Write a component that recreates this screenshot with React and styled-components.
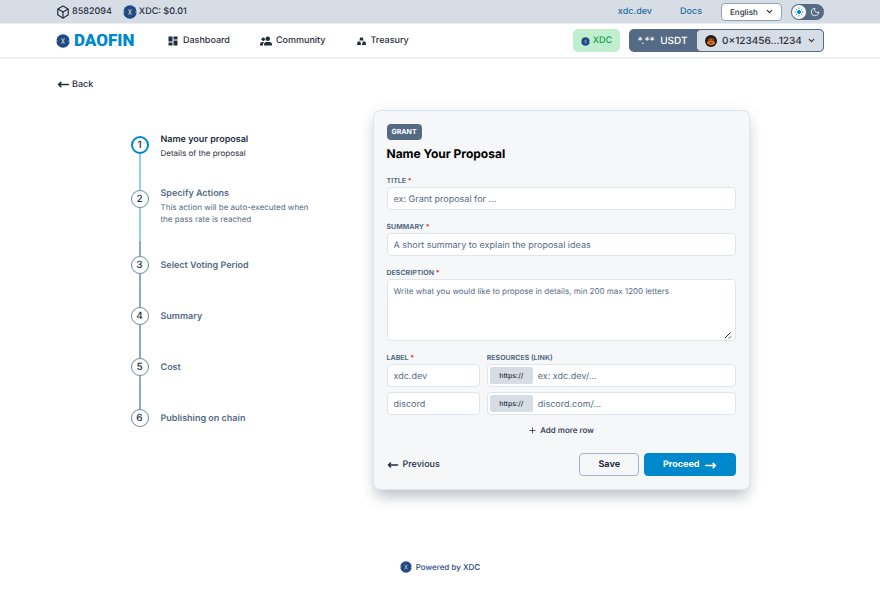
import React, { useState } from "react";
import styled, { createGlobalStyle } from "styled-components";
import { MdDashboard } from "react-icons/md";
import { FiBox } from "react-icons/fi";
import {
  HiOutlineArrowNarrowLeft,
  HiOutlineArrowNarrowRight,
} from "react-icons/hi";
import { ChevronDown, Moon, Plus, Sun } from "lucide-react";

const Palette = {
  ink: "#1f2d3d",
  slate: "#556b84",
  mist: "#d7dde4",
  line: "#dfe5ec",
  panel: "#f5f7f9",
  blue: "#0088cc",
  sky: "#8fd0f3",
  steel: "#93a6bc",
  navy: "#1f4a85",
  link: "#1a6c9c",
};

const GlobalStyle = createGlobalStyle`
  * {
    box-sizing: border-box;
  }
  body {
    margin: 0;
    background: white;
    color: ${Palette.ink};
    font-family: Inter, "Liberation Sans", sans-serif;
    font-size: 9px;
    line-height: 12px;
    text-rendering: geometricPrecision;
  }
  button, input, select, textarea {
    font: inherit;
    color: inherit;
    text-rendering: inherit;
  }
  button {
    cursor: pointer;
  }
  a {
    color: inherit;
    text-decoration: none;
  }
  svg {
    flex-shrink: 0;
  }
`;

const Page = styled.div`
  min-height: 100vh;
  display: flex;
  flex-direction: column;
`;

const Bar = styled.div`
  display: flex;
  align-items: center;
  justify-content: space-between;
  padding: 0 56px;
`;

const TopBar = styled(Bar)`
  height: 24px;
  background: ${Palette.mist};
  border-bottom: 1px solid #e8edf2;
`;

const NavBar = styled(Bar)`
  height: 35px;
  border-bottom: 2px solid #edf1f5;
`;

const Group = styled.div`
  display: flex;
  align-items: center;
  gap: ${(props) => props.$gap || 4}px;
  font-weight: 500;
`;

const Stat = styled(Group)`
  padding-top: 1px;
`;

const TopLink = styled.a`
  padding-top: 1px;
  color: ${Palette.link};
  font-weight: 500;
`;

const LanguageBox = styled.div`
  position: relative;
  display: flex;
  align-items: center;
  svg {
    position: absolute;
    right: 8px;
    pointer-events: none;
  }
`;

const Language = styled.select`
  appearance: none;
  width: 61px;
  height: 18px;
  padding: 0 8px;
  border: 1px solid #8fa3ba;
  border-radius: 4px;
  background: white;
  font-size: 8px;
  font-weight: 500;
`;

const ThemeSwitch = styled.button`
  display: flex;
  align-items: center;
  justify-content: space-between;
  width: 33px;
  height: 16px;
  padding: 0 4px 0 1px;
  border: 0;
  border-radius: 8px;
  background: ${Palette.slate};
  color: white;
  span {
    display: grid;
    place-items: center;
    width: 14px;
    height: 14px;
    border-radius: 50%;
    background: white;
    color: ${Palette.blue};
  }
`;

const Brand = styled.a`
  display: flex;
  align-items: center;
  gap: 4px;
  width: 111px;
  color: ${Palette.blue};
  font-family: Roboto, "Liberation Sans", sans-serif;
  font-size: 17px;
  font-weight: 900;
`;

const Nav = styled.nav`
  display: flex;
  flex: 1;
  gap: 30px;
`;

const NavLink = styled.a`
  display: flex;
  align-items: center;
  gap: 4px;
  padding-top: 1px;
  font-weight: 500;
`;

const Network = styled.button`
  display: flex;
  align-items: center;
  justify-content: center;
  gap: 3px;
  width: 47px;
  height: 23px;
  padding: 1px 0 0;
  border: 0;
  border-radius: 5px;
  background: #c0efcf;
  color: #169c46;
  font-weight: 500;
`;

const Wallet = styled.div`
  display: flex;
  align-items: center;
  height: 23px;
  border-radius: 5px;
  background: ${Palette.slate};
  color: white;
  font-size: 10px;
`;

const Balance = styled.span`
  width: 67px;
  text-align: center;
  white-space: pre;
`;

const Account = styled.button`
  display: flex;
  align-items: center;
  gap: 5px;
  width: 128px;
  height: 23px;
  padding: 0 8px;
  border: 1px solid ${Palette.slate};
  border-radius: 5px;
  background: ${Palette.mist};
  color: ${Palette.ink};
  font-weight: 500;
  svg:last-child {
    margin-left: auto;
    margin-right: 2px;
  }
`;

const BackLink = styled.a`
  display: flex;
  align-items: center;
  align-self: flex-start;
  gap: 2px;
  margin: 19px 57px 0;
  font-weight: 500;
  path {
    stroke-width: 3px;
  }
`;

const Main = styled.main`
  display: flex;
  align-items: flex-start;
  width: 100%;
  max-width: 619px;
  margin: 19px auto 0;
`;

const Stepper = styled.ol`
  flex: 1;
  margin: 0;
  padding: 26px 0 0;
  list-style: none;
`;

const StepItem = styled.li`
  display: flex;
  gap: 12px;
`;

const Track = styled.div`
  display: flex;
  flex-direction: column;
  align-items: center;
`;

const StepNumber = styled.span`
  display: grid;
  place-items: center;
  width: 18px;
  height: 18px;
  border: ${(props) =>
    props.$active ? `2px solid ${Palette.blue}` : "1px solid #7088a5"};
  border-radius: 50%;
  font-size: 10px;
  font-weight: 500;
`;

const Connector = styled.span`
  flex: 1;
  width: 2px;
  background: linear-gradient(
    ${Palette.sky} ${(props) => props.$done}%,
    ${Palette.steel} ${(props) => props.$done}%
  );
`;

const StepText = styled.div`
  max-width: 156px;
  margin-top: ${(props) => (props.$described ? -3 : 3)}px;
  padding-bottom: ${(props) =>
    props.$last ? 0 : props.$described ? 31 : 34}px;
  color: ${(props) => (props.$active ? Palette.ink : Palette.slate)};
  font-size: 8px;
  h3 {
    margin: 0;
    font-size: 9px;
    font-weight: 600;
    line-height: 14px;
  }
  p {
    margin: 0;
  }
`;

const Card = styled.form`
  flex: 0 1 377px;
  padding: 13px;
  border: 1px solid ${Palette.line};
  border-radius: 7px;
  background: ${Palette.panel};
  box-shadow: 0 10px 14px -3px rgba(31, 45, 61, 0.24),
    0 2px 14px rgba(31, 45, 61, 0.08);
`;

const Tag = styled.span`
  display: block;
  width: fit-content;
  padding: 2px 5px;
  border-radius: 4px;
  background: ${Palette.slate};
  color: white;
  font-size: 7px;
  font-weight: 700;
`;

const Title = styled.h1`
  margin: 6px 0 15px;
  color: black;
  font-size: 12px;
  font-weight: 700;
  line-height: 16px;
`;

const Field = styled.div`
  margin-bottom: 13px;
`;

const Label = styled.label`
  display: block;
  margin-bottom: 2px;
  color: ${Palette.slate};
  font-size: 7px;
  font-weight: 700;
  line-height: 8px;
  text-transform: uppercase;
  span {
    color: #f03030;
  }
`;

const Input = styled.input`
  display: block;
  width: 100%;
  min-width: 0;
  height: 23px;
  padding: 1px 6px 0;
  border: 1px solid ${Palette.line};
  border-radius: 4px;
  background: white;
  &::placeholder {
    color: ${Palette.slate};
    opacity: 1;
  }
`;

const TextArea = styled(Input)`
  height: 62px;
  padding: 5px 6px;
  font-size: 8px;
  resize: none;
`;

const TextAreaBox = styled.div`
  position: relative;
  svg {
    position: absolute;
    right: 4px;
    bottom: 2px;
  }
`;

const LinkGrid = styled.div`
  display: grid;
  grid-template-columns: 3fr 8fr;
  column-gap: 7px;
  row-gap: 5px;
  ${Label} {
    margin-bottom: -3px;
  }
`;

const PrefixedInput = styled.div`
  display: flex;
  align-items: center;
  height: 23px;
  padding: 2px;
  border: 1px solid ${Palette.line};
  border-radius: 4px;
  background: white;
  span {
    flex-shrink: 0;
    width: 43px;
    height: 17px;
    border-radius: 2px;
    background: ${Palette.mist};
    font-size: 7px;
    font-weight: 500;
    line-height: 17px;
    text-align: center;
  }
  ${Input} {
    height: 17px;
    padding: 1px 5px 0;
    border: 0;
  }
`;

const PlainButton = styled.button`
  display: flex;
  align-items: center;
  gap: ${(props) => props.$gap}px;
  padding: 0;
  border: 0;
  background: none;
  font-weight: 500;
`;

const AddRow = styled(PlainButton)`
  margin: 9px auto 17px;
  font-size: 8px;
`;

const Actions = styled.div`
  display: flex;
  gap: 5px;
  path {
    stroke-width: 3px;
  }
  ${PlainButton} {
    margin-right: auto;
    padding-top: 1px;
  }
`;

const ActionButton = styled.button`
  display: flex;
  align-items: center;
  justify-content: center;
  gap: 4px;
  height: 23px;
  padding: 1px 18px 0;
  border: 1px solid ${(props) => (props.$primary ? Palette.blue : "#a3b4c8")};
  border-radius: 4px;
  background: ${(props) => (props.$primary ? Palette.blue : "transparent")};
  color: ${(props) => (props.$primary ? "white" : Palette.ink)};
  font-weight: 700;
`;

const Footer = styled.footer`
  display: flex;
  align-items: center;
  justify-content: center;
  gap: 4px;
  margin-top: auto;
  padding: 71px 0 18px;
  color: ${Palette.navy};
  font-size: 8px;
  font-weight: 500;
`;

function XdcIcon({ size }) {
  return (
    <svg width={size} height={size} viewBox='0 0 24 24' aria-hidden='true'>
      <circle cx='12' cy='12' r='11.5' fill='#1f4a85' />
      <path d='M0 12h2.500M21.500 12h2.500' stroke='#d7dde4' strokeWidth='2' />
      <path
        d='M9.500 7.500l5 9M14.500 7.500l-5 9'
        stroke='#b3b3ad'
        strokeWidth='1.800'
        fill='none'
      />
    </svg>
  );
}

function CommunityIcon() {
  return (
    <svg width='12' height='10' viewBox='0 0 24 20' fill={Palette.ink}>
      <circle cx='6.500' cy='6.500' r='3.500' />
      <path d='M0 19v-2.500Q0 12 5 12h3q-2 2-2 5v2z' />
      <circle cx='15.500' cy='5.500' r='4.500' />
      <path d='M8 19v-2q0-5 5-5h6q5 0 5 5v2z' />
    </svg>
  );
}

function TreasuryIcon() {
  return (
    <svg width='11' height='10' viewBox='0 0 22 20' fill={Palette.ink}>
      <path d='M8 4q0-1 1-1h4q1 0 1 1l1 5H7z' />
      <path d='M3 12q0-1 1-1h4q1 0 1 1l1 6H2zM13 12q0-1 1-1h4q1 0 1 1l1 6h-8z' />
    </svg>
  );
}

function Avatar() {
  return (
    <svg width='12' height='12' viewBox='0 0 24 24' aria-hidden='true'>
      <circle cx='12' cy='12' r='12' fill='#221a1c' />
      <path d='M6 8q6-3 12 0v6H6z' fill='#b9561b' />
      <path d='M5 13h14l1 4q-8 7-16 0z' fill='#ee7a1c' />
      <path d='M7 10h3M14 10h3M9 16h6' stroke='#4a2410' strokeWidth='2' />
    </svg>
  );
}

const steps = [
  { title: "Name your proposal", text: "Details of the proposal", done: 100 },
  {
    title: "Specify Actions",
    text: "This action will be auto-executed when the pass rate is reached",
    done: 68,
  },
  { title: "Select Voting Period", done: 0 },
  { title: "Summary", done: 0 },
  { title: "Cost", done: 0 },
  { title: "Publishing on chain", done: 0 },
];

function Header() {
  const [dark, setDark] = useState(false);
  return (
    <header>
      <TopBar>
        <Group $gap={11}>
          <Stat $gap={2}>
            <FiBox size={14} />
            8582094
          </Stat>
          <Stat $gap={2}>
            <XdcIcon size={14} />
            XDC: $0.01
          </Stat>
        </Group>
        <Group $gap={19}>
          <Group $gap={28}>
            <TopLink href='#xdc'>xdc.dev</TopLink>
            <TopLink href='#docs'>Docs</TopLink>
          </Group>
          <Group $gap={9}>
            <LanguageBox>
              <Language aria-label='Language'>
                <option>English</option>
              </Language>
              <ChevronDown size={9} strokeWidth={3} />
            </LanguageBox>
            <ThemeSwitch
              type='button'
              role='switch'
              aria-checked={dark}
              aria-label='Dark mode'
              onClick={() => setDark(!dark)}
            >
              <span>
                <Sun size={10} fill='currentColor' />
              </span>
              <Moon size={10} />
            </ThemeSwitch>
          </Group>
        </Group>
      </TopBar>
      <NavBar>
        <Brand href='#home'>
          <XdcIcon size={14} />
          DAOFIN
        </Brand>
        <Nav>
          <NavLink href='#dashboard'>
            <MdDashboard size={12} />
            Dashboard
          </NavLink>
          <NavLink href='#community'>
            <CommunityIcon />
            Community
          </NavLink>
          <NavLink href='#treasury'>
            <TreasuryIcon />
            Treasury
          </NavLink>
        </Nav>
        <Group $gap={9}>
          <Network type='button'>
            <XdcIcon size={9} />
            XDC
          </Network>
          <Wallet>
            <Balance>*.**{"  "}USDT</Balance>
            <Account type='button'>
              <Avatar />
              0×123456...1234
              <ChevronDown size={9} strokeWidth={3} />
            </Account>
          </Wallet>
        </Group>
      </NavBar>
    </header>
  );
}

function Steps() {
  return (
    <Stepper>
      {steps.map((step, i) => (
        <StepItem key={step.title}>
          <Track>
            <StepNumber $active={i === 0}>{i + 1}</StepNumber>
            {i < steps.length - 1 && <Connector $done={step.done} />}
          </Track>
          <StepText
            $active={i === 0}
            $described={!!step.text}
            $last={i === steps.length - 1}
          >
            <h3>{step.title}</h3>
            {step.text && <p>{step.text}</p>}
          </StepText>
        </StepItem>
      ))}
    </Stepper>
  );
}

function ProposalForm() {
  return (
    <Card onSubmit={(e) => e.preventDefault()}>
      <Tag>GRANT</Tag>
      <Title>Name Your Proposal</Title>
      <Field>
        <Label htmlFor='title'>
          Title <span>*</span>
        </Label>
        <Input id='title' placeholder='ex: Grant proposal for ...' />
      </Field>
      <Field>
        <Label htmlFor='summary'>
          Summary <span>*</span>
        </Label>
        <Input
          id='summary'
          placeholder='A short summary to explain the proposal ideas'
        />
      </Field>
      <Field>
        <Label htmlFor='description'>
          Description <span>*</span>
        </Label>
        <TextAreaBox>
          <TextArea
            as='textarea'
            id='description'
            placeholder='Write what you would like to propose in details, min 200 max 1200 letters'
          />
          <svg width='8' height='8' viewBox='0 0 8 8' stroke={Palette.ink}>
            <path d='M1 7l5.500-5.500M5 7.500l2-2' />
          </svg>
        </TextAreaBox>
      </Field>
      <LinkGrid>
        <Label htmlFor='label-1'>
          Label <span>*</span>
        </Label>
        <Label htmlFor='link-1'>Resources (link)</Label>
        <Input id='label-1' placeholder='xdc.dev' />
        <PrefixedInput>
          <span>https://</span>
          <Input id='link-1' placeholder='ex: xdc.dev/...' />
        </PrefixedInput>
        <Input aria-label='Label 2' placeholder='discord' />
        <PrefixedInput>
          <span>https://</span>
          <Input aria-label='Link 2' placeholder='discord.com/...' />
        </PrefixedInput>
      </LinkGrid>
      <AddRow type='button' $gap={3}>
        <Plus size={9} />
        Add more row
      </AddRow>
      <Actions>
        <PlainButton type='button' $gap={4}>
          <HiOutlineArrowNarrowLeft size={12} />
          Previous
        </PlainButton>
        <ActionButton type='button'>Save</ActionButton>
        <ActionButton type='submit' $primary>
          Proceed
          <HiOutlineArrowNarrowRight size={13} />
        </ActionButton>
      </Actions>
    </Card>
  );
}

export default function App() {
  return (
    <Page>
      <GlobalStyle />
      <Header />
      <BackLink href='#back'>
        <HiOutlineArrowNarrowLeft size={13} />
        Back
      </BackLink>
      <Main>
        <Steps />
        <ProposalForm />
      </Main>
      <Footer>
        <XdcIcon size={12} />
        Powered by XDC
      </Footer>
    </Page>
  );
}
